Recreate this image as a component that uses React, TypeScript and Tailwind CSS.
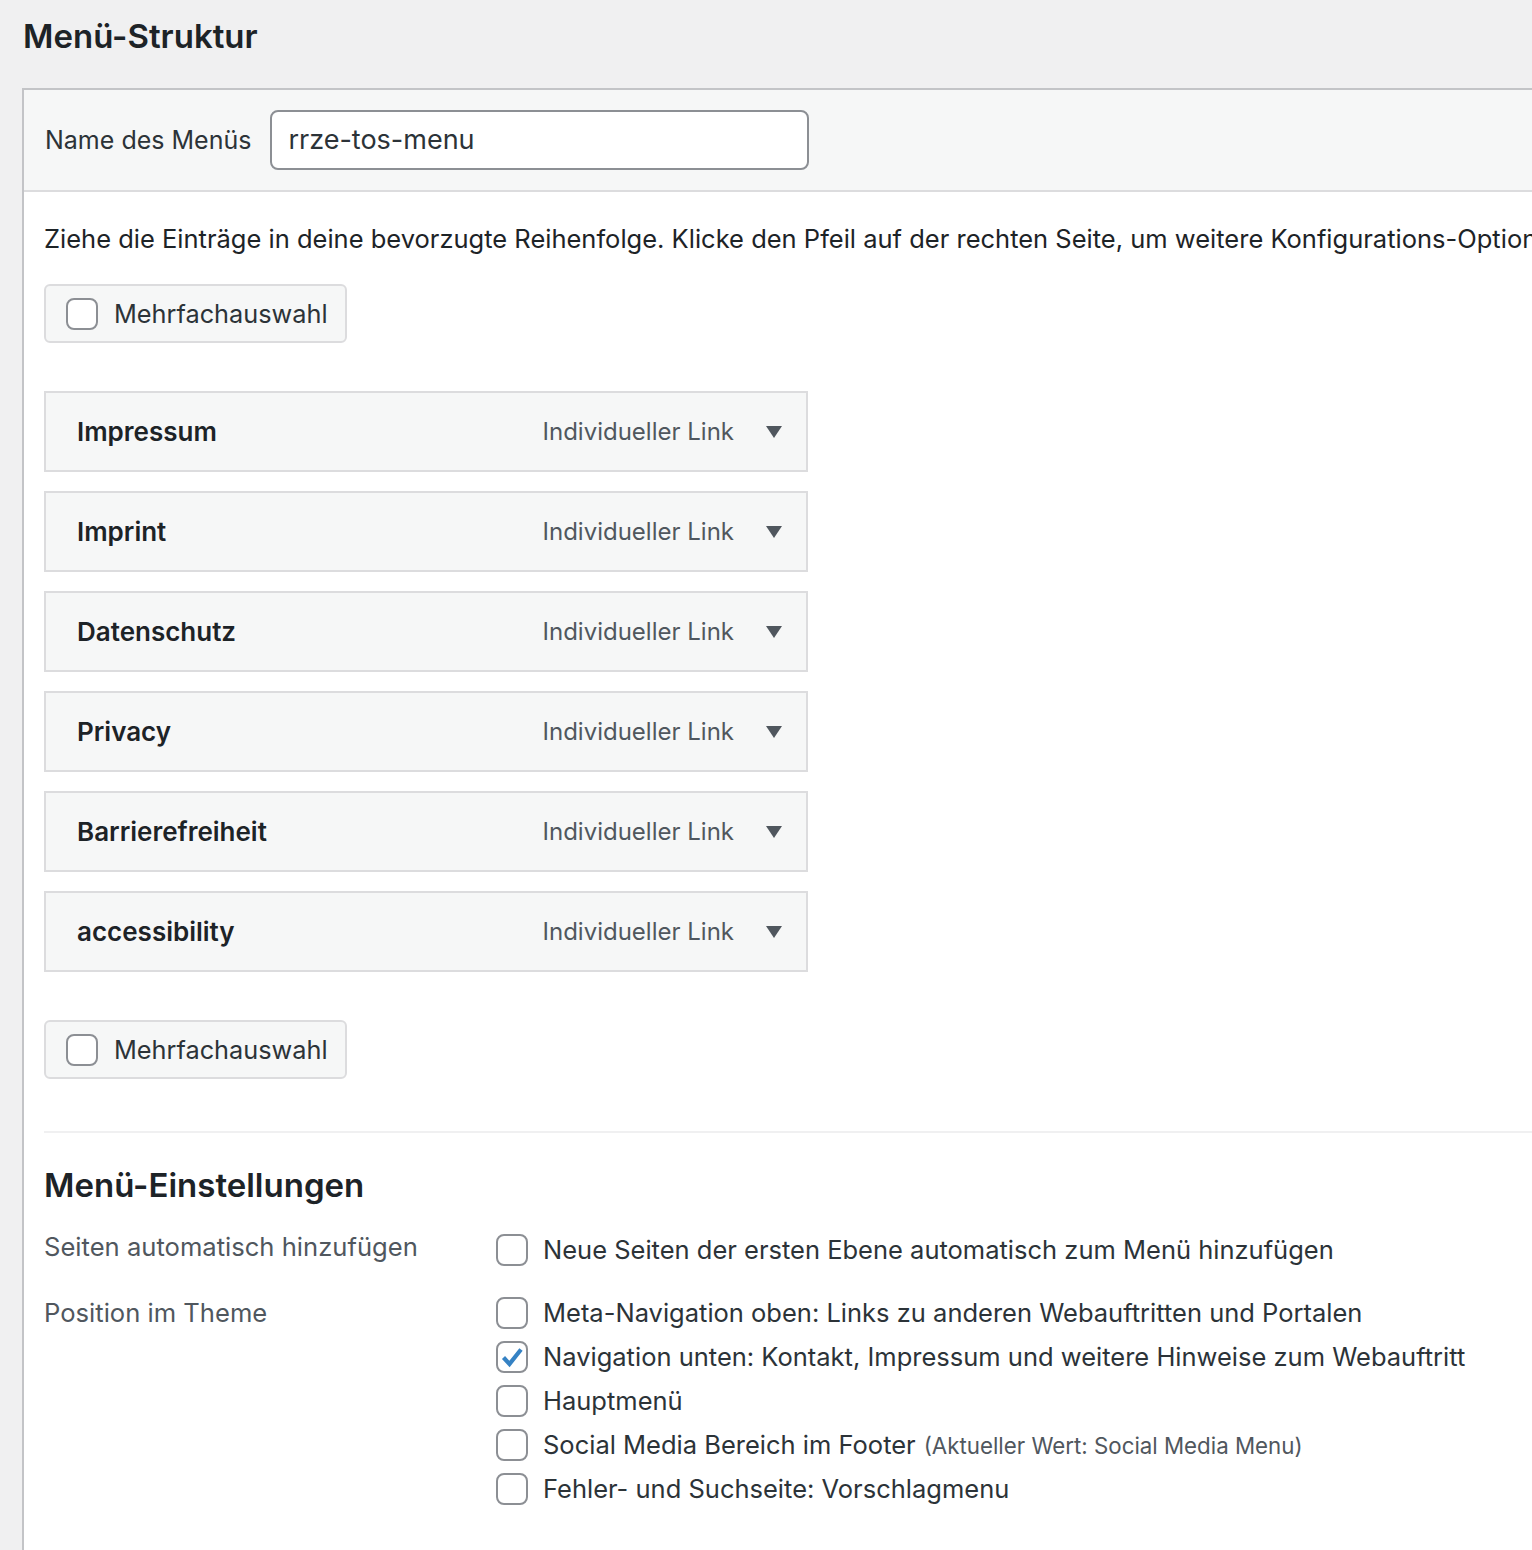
import React from 'react';

const items = ['Impressum', 'Imprint', 'Datenschutz', 'Privacy', 'Barrierefreiheit', 'accessibility'];

const positions = [
  { label: 'Meta-Navigation oben: Links zu anderen Webauftritten und Portalen', checked: false },
  { label: 'Navigation unten: Kontakt, Impressum und weitere Hinweise zum Webauftritt', checked: true },
  { label: 'Hauptmenü', checked: false },
  { label: 'Social Media Bereich im Footer', note: '(Aktueller Wert: Social Media Menu)', checked: false },
  { label: 'Fehler- und Suchseite: Vorschlagmenu', checked: false },
];

const Checkbox = ({ checked = false }: { checked?: boolean }) => (
  <span className="flex h-[32px] w-[32px] shrink-0 items-center justify-center rounded-[8px] border-2 border-[#8c8f94] bg-white">
    {checked && (
      <svg width="28" height="28" viewBox="0 0 28 28">
        <path d="M5.5 14.5l6 6.5L23 6.5" fill="none" stroke="#3582c4" strokeWidth="4.2" strokeLinejoin="miter" />
      </svg>
    )}
  </span>
);

const MultiSelect = () => (
  <div className="flex h-[59px] w-[303px] items-center gap-[16px] rounded-[6px] border-2 border-[#dcdcde] bg-[#f6f7f7] pl-[20px] text-[25.3px] text-[#2c3338]">
    <Checkbox />
    <span>Mehrfachauswahl</span>
  </div>
);

const MenuItem = ({ title }: { title: string }) => (
  <div className="flex h-[81px] w-[764px] items-center border-2 border-[#dcdcde] bg-[#f6f7f7] pl-[31px] pr-[24px]">
    <span className="flex-1 text-[26px] font-semibold text-[#1d2327]">{title}</span>
    <span className="text-[24px] text-[#50575e]">Individueller Link</span>
    <svg className="ml-[32px]" width="16" height="12" viewBox="0 0 16 12">
      <path d="M0 0h16L8 12z" fill="#50575e" />
    </svg>
  </div>
);

export default function App() {
  return (
    <div className="h-[1550px] w-[1532px] overflow-hidden bg-[#f0f0f1] font-['Inter',sans-serif] text-[#1d2327]">
      <h2 className="pl-[23px] pt-[14px] text-[33px] font-semibold leading-[44px] text-[#1d2327]">Menü-Struktur</h2>
      <div className="ml-[22px] mt-[30px] w-[1560px] border-l-2 border-t-2 border-[#c3c4c7] bg-white">
        <div className="flex h-[102px] items-center gap-[19px] border-b-2 border-[#dcdcde] bg-[#f6f7f7] pl-[21px]">
          <span className="pt-[2px] text-[25px] text-[#2c3338]">Name des Menüs</span>
          <div className="flex h-[60px] w-[539px] items-center rounded-[8px] border-2 border-[#8c8f94] bg-white pl-[16px] text-[27px] text-[#2c3338]">
            rrze-tos-menu
          </div>
        </div>
        <div className="px-[20px]">
          <p className="whitespace-nowrap pt-[29px] text-[25.5px] leading-[36px] text-[#1d2327]">
            Ziehe die Einträge in deine bevorzugte Reihenfolge. Klicke den Pfeil auf der rechten Seite, um weitere Konfigurations-Optionen anzuzeigen.
          </p>
          <div className="mt-[27px]">
            <MultiSelect />
          </div>
          <div className="mt-[48px] flex flex-col gap-[19px]">
            {items.map((t) => (
              <MenuItem key={t} title={t} />
            ))}
          </div>
          <div className="mt-[48px]">
            <MultiSelect />
          </div>
          <div className="mt-[52px] border-t-2 border-[#f0f0f1]" />
          <h3 className="mt-[32px] text-[33px] font-semibold leading-[40px] text-[#1d2327]">Menü-Einstellungen</h3>
          <div className="mt-[26px] flex">
            <div className="w-[452px] text-[25.6px] leading-[32px] text-[#50575e]">Seiten automatisch hinzufügen</div>
            <label className="flex items-center gap-[15px] text-[25.5px] text-[#2c3338]">
              <Checkbox />
              <span>Neue Seiten der ersten Ebene automatisch zum Menü hinzufügen</span>
            </label>
          </div>
          <div className="mt-[28px] flex">
            <div className="w-[452px] text-[25.6px] leading-[32px] text-[#50575e]">Position im Theme</div>
            <div className="flex flex-col gap-[12px]">
              {positions.map((p) => (
                <label key={p.label} className="flex h-[32px] items-center gap-[15px] text-[25.5px] text-[#2c3338]">
                  <Checkbox checked={p.checked} />
                  <span>
                    {p.label}
                    {p.note && <span className="ml-[8px] text-[22.3px] text-[#50575e]">{p.note}</span>}
                  </span>
                </label>
              ))}
            </div>
          </div>
          <div className="h-[200px]" />
        </div>
      </div>
    </div>
  );
}
